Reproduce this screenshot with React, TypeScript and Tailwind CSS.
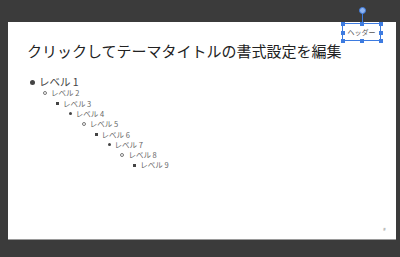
const LEVELS = [
  { n: 1, bullet: 'dot' },
  { n: 2, bullet: 'ring' },
  { n: 3, bullet: 'square' },
  { n: 4, bullet: 'dot' },
  { n: 5, bullet: 'ring' },
  { n: 6, bullet: 'square' },
  { n: 7, bullet: 'dot' },
  { n: 8, bullet: 'ring' },
  { n: 9, bullet: 'square' },
]

function Bullet({ kind, big }: { kind: string; big?: boolean }) {
  if (kind === 'dot') {
    return <span className={`${big ? 'w-[5px] h-[5px]' : 'w-[3px] h-[3px]'} rounded-full bg-[#444] shrink-0`} />
  }
  if (kind === 'ring') {
    return <span className="w-[4px] h-[4px] rounded-full border border-[#777] shrink-0" />
  }
  return <span className="w-[3px] h-[3px] bg-[#444] shrink-0" />
}

function Handle({ className }: { className: string }) {
  return <span className={`absolute w-[4px] h-[4px] bg-[#3d7be0] ${className}`} />
}

export default function App() {
  return (
    <div
      className="w-[400px] h-[257px] bg-[#3b3b3b] pt-[22px] pl-[8px] overflow-hidden"
      style={{ fontFamily: '"Noto Sans CJK JP", "Liberation Sans", sans-serif' }}
    >
      <div className="relative w-[388px] h-[217px] bg-white shadow-[0_1px_0_#9a9a9a]">
        {/* title */}
        <div className="pt-[19px] pl-[19px] text-[15px] leading-[20px] text-[#222]">
          クリックしてテーマタイトルの書式設定を編集
        </div>

        {/* body levels */}
        <div className="pt-[15px] flex flex-col">
          {LEVELS.map((l, i) => (
            <div
              key={l.n}
              className={`flex items-center ${i === 0 ? 'h-[12px]' : 'h-[10.3px]'}`}
              style={{ paddingLeft: i === 0 ? 22 : 35 + (i - 1) * 12.9 }}
            >
              <Bullet kind={l.bullet} big={i === 0} />
              <span
                className={`${i === 0 ? 'ml-[4px] text-[10.5px] text-[#444]' : 'ml-[4px] text-[7.5px] text-[#666]'} leading-none whitespace-nowrap`}
              >
                レベル {l.n}
              </span>
            </div>
          ))}
        </div>

        {/* page number */}
        <span className="absolute left-[375px] top-[204px] text-[5px] leading-none text-[#888]">#</span>

        {/* selected header box */}
        <div className="absolute left-[334px] top-[1px] w-[39px] h-[18px] border border-[#3d7be0]">
          <div className="h-full flex items-center justify-center text-[7px] leading-none text-[#555] whitespace-nowrap">
            ヘッダー
          </div>
          <Handle className="-left-[2.5px] -top-[2.5px]" />
          <Handle className="left-[16.5px] -top-[2.5px]" />
          <Handle className="-right-[2.5px] -top-[2.5px]" />
          <Handle className="-left-[2.5px] top-[6.5px]" />
          <Handle className="-right-[2.5px] top-[6.5px]" />
          <Handle className="-left-[2.5px] -bottom-[2.5px]" />
          <Handle className="left-[16.5px] -bottom-[2.5px]" />
          <Handle className="-right-[2.5px] -bottom-[2.5px]" />
          <span className="absolute left-[18.5px] -top-[12px] w-[1px] h-[10px] bg-[#3d7be0]" />
          <span className="absolute left-[15.5px] -top-[17px] w-[7px] h-[7px] rounded-full border border-[#3d7be0] bg-[#8fb4f0]" />
        </div>
      </div>
    </div>
  )
}
